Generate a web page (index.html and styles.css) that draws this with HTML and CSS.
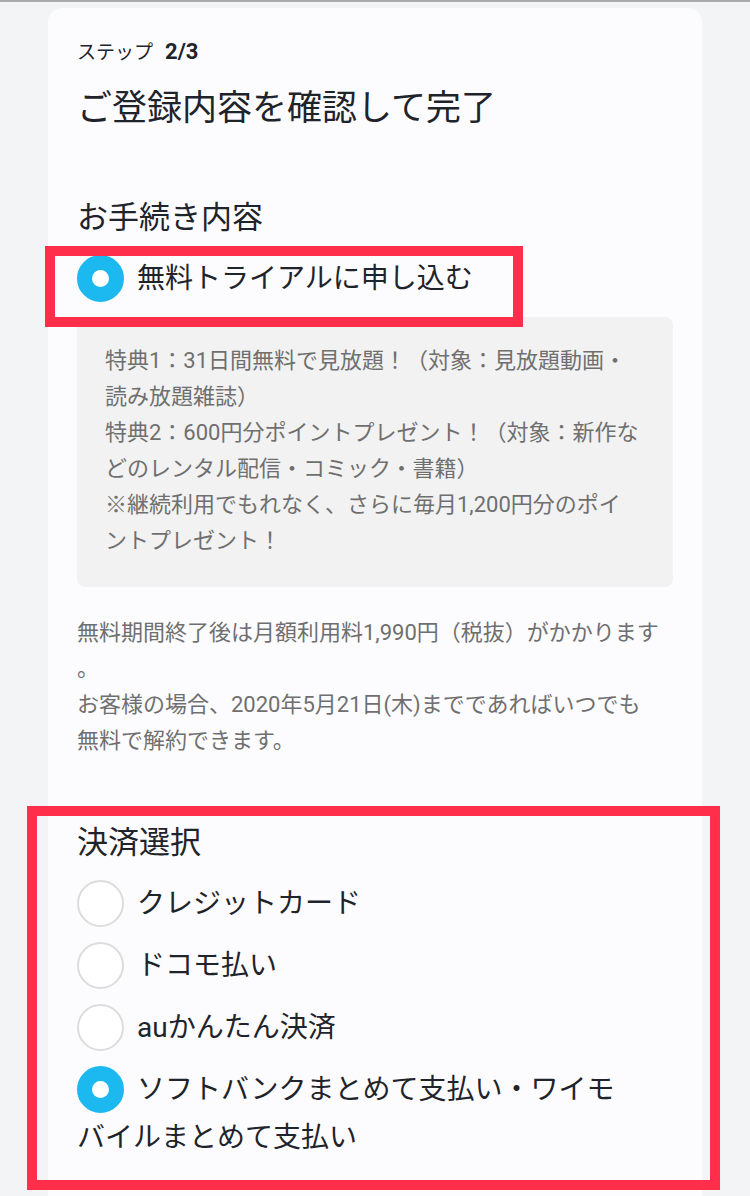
FILE: index.html
```html
<!DOCTYPE html>
<html lang="ja">
<head>
  <meta charset="UTF-8" />
  <meta name="viewport" content="width=device-width, initial-scale=1" />
  <title>ご登録内容を確認して完了</title>
  <link rel="stylesheet" href="styles.css">
</head>
<body>
  <div class="page">
    <section class="card">
      <p class="step">ステップ<b>2/3</b></p>
      <h1 class="title">ご登録内容を確認して完了</h1>

      <h2 class="section-title">お手続き内容</h2>
      <div class="option"><span class="radio checked"></span>無料トライアルに申し込む</div>

      <div class="perks">
        <p>特典1：31日間無料で見放題！（対象：見放題動画・読み放題雑誌）</p>
        <p>特典2：600円分ポイントプレゼント！（対象：新作などのレンタル配信・コミック・書籍）</p>
        <p>※継続利用でもれなく、さらに毎月1,200円分のポイ<br>ントプレゼント！</p>
      </div>

      <p class="note">無料期間終了後は月額利用料1,990円（税抜）がかかります<br>。<br>お客様の場合、2020年5月21日(木)までであればいつでも<br>無料で解約できます。</p>

      <h2 class="section-title pay-title">決済選択</h2>
      <ul class="options">
        <li class="option"><span class="radio"></span>クレジットカード</li>
        <li class="option"><span class="radio"></span>ドコモ払い</li>
        <li class="option"><span class="radio"></span>auかんたん決済</li>
        <li class="option"><span class="radio checked"></span>ソフトバンクまとめて支払い・ワイモバイルまとめて支払い</li>
      </ul>
    </section>

    <!-- highlight frames -->
    <div class="mark mark-plan"></div>
    <div class="mark mark-pay"></div>
  </div>
</body>
</html>
```

FILE: styles.css
```css
body {
  margin: 0;
  background: #f3f4f6;
  border-top: 2px solid #a9a9a9;
  font-family: Roboto, "Noto Sans CJK JP", sans-serif;
  color: #1f232a;
  overflow: hidden;
}

.page {
  position: relative;
  height: 1194px;
}

.card {
  width: 596px;
  margin: 6px auto 0;
  padding: 29px 29px 60px;
  background: #fcfcfe;
  border-radius: 14px;
}

p, h1, h2, ul {
  margin: 0;
  padding: 0;
}

.step {
  font-size: 19px;
  line-height: 30px;
}

.step b {
  font-size: 22px;
  font-weight: 700;
  margin-left: 12px;
}

.title {
  margin-top: 16px;
  font-size: 35px;
  font-weight: 400;
  line-height: 50px;
}

.section-title {
  margin-top: 62px;
  font-size: 31px;
  font-weight: 400;
  line-height: 44px;
}

.option {
  font-size: 28px;
  line-height: 48px;
  margin-top: 15px;
}

.radio {
  display: inline-block;
  box-sizing: border-box;
  width: 47px;
  height: 47px;
  margin-right: 13px;
  vertical-align: top;
  border: 2px solid #dcdcdc;
  border-radius: 50%;
  background: #fff;
}

.radio.checked {
  border: 15.5px solid #1cb8f0;
}

.perks {
  margin-top: 14px;
  padding: 26px 29px 28px 28px;
  background: #f2f2f2;
  border-radius: 8px;
  color: #6f6f6f;
  font-size: 22px;
  line-height: 36px;
}

.note {
  margin-top: 28px;
  color: #6f6f6f;
  font-size: 22px;
  line-height: 36px;
}

.pay-title {
  margin-top: 62px;
}

.options {
  list-style: none;
  max-width: 553px;
  margin-top: 15px;
}

.options .option {
  margin-top: 0;
  margin-bottom: 14px;
}

.mark {
  position: absolute;
  border: 10px solid #ff2f4b;
}

.mark-plan {
  left: 45px;
  top: 238px;
  width: 458px;
  height: 61px;
}

.mark-pay {
  left: 27px;
  top: 798px;
  width: 673px;
  height: 364px;
}
```
